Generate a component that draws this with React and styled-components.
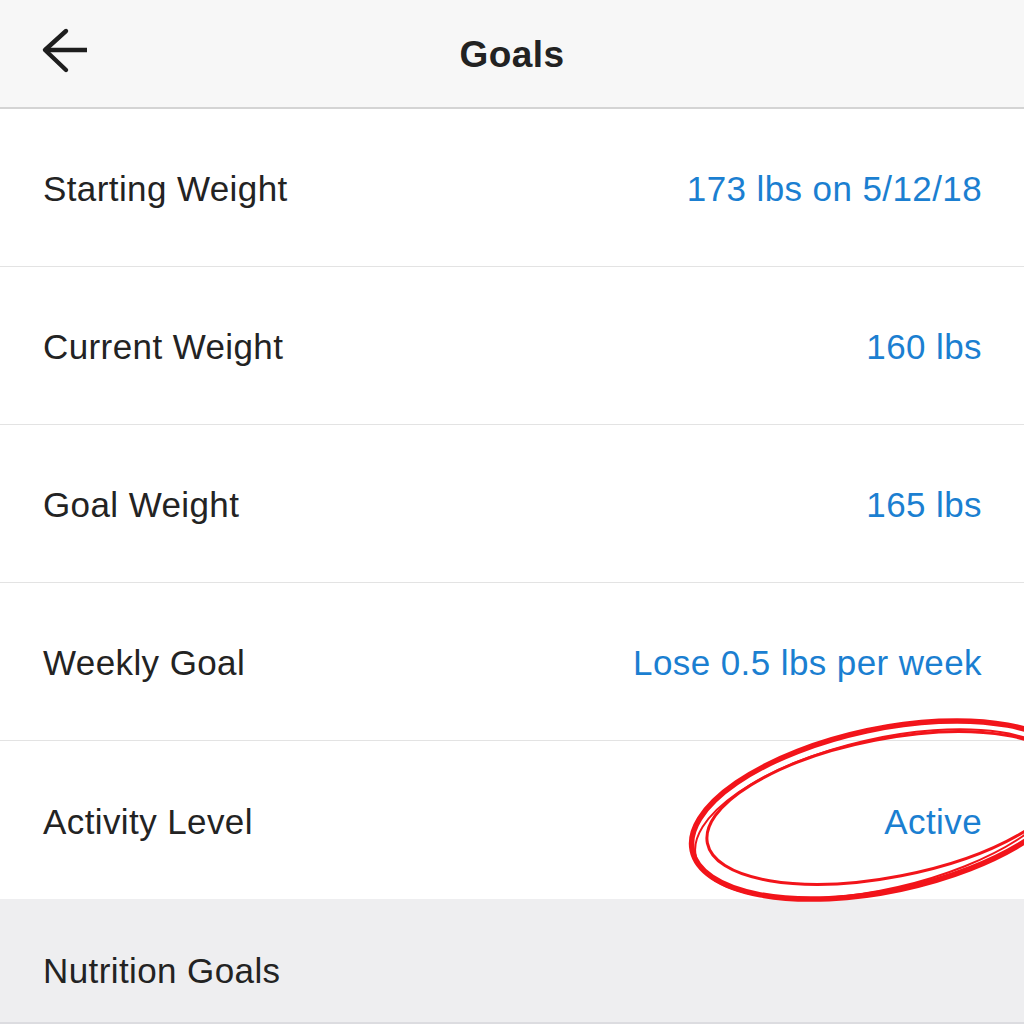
import React from 'react';
import styled, { createGlobalStyle } from 'styled-components';

const font = `"Liberation Sans", Arial, Helvetica, sans-serif`;

const GlobalStyle = createGlobalStyle`
  html, body {
    margin: 0;
    padding: 0;
    background: #ffffff;
  }
  body {
    font-family: ${font};
  }
`;

const Page = styled.div`
  position: relative;
  width: 1024px;
  height: 1024px;
  overflow: hidden;
  background: #ffffff;
  font-family: ${font};
`;

const NavBar = styled.header`
  position: relative;
  display: flex;
  align-items: center;
  justify-content: center;
  height: 109px;
  padding-top: 2px;
  background-color: #f7f7f7;
  border-bottom: 2px solid #d4d4d4;
  box-sizing: border-box;
`;

const BackButton = styled.button`
  position: absolute;
  left: 40px;
  top: 26px;
  width: 50px;
  height: 50px;
  padding: 0;
  border: 0;
  background: none;
  display: flex;
  align-items: center;
  justify-content: center;
`;

const Title = styled.h1`
  margin: 0;
  font-family: ${font};
  font-size: 37px;
  font-weight: 700;
  color: #222222;
  letter-spacing: 0.4px;
`;

const List = styled.div`
  display: flex;
  flex-direction: column;
`;

const Row = styled.div`
  display: flex;
  align-items: center;
  justify-content: space-between;
  height: 158px;
  padding: 3px 42px 0 43px;
  box-sizing: border-box;
  border-bottom: ${(p) => (p.last ? 'none' : '1px solid #e3e3e3')};
`;

const Label = styled.span`
  font-family: ${font};
  font-size: 35px;
  color: #232323;
  letter-spacing: 0.4px;
`;

const Value = styled.span`
  font-family: ${font};
  font-size: 35px;
  color: #1b7fd1;
  letter-spacing: 0.4px;
`;

const SectionHeader = styled.div`
  display: flex;
  align-items: center;
  height: 125px;
  padding: 20px 43px 0;
  box-sizing: border-box;
  background-color: #eeeef0;
  border-bottom: 2px solid #dcdce0;
`;

const SectionTitle = styled.span`
  font-family: ${font};
  font-size: 35px;
  color: #232323;
  letter-spacing: 0.4px;
`;

const Scribble = styled.svg`
  position: absolute;
  left: 660px;
  top: 700px;
  width: 364px;
  height: 210px;
  pointer-events: none;
`;

const rows = [
  { label: 'Starting Weight', value: '173 lbs on 5/12/18' },
  { label: 'Current Weight', value: '160 lbs' },
  { label: 'Goal Weight', value: '165 lbs' },
  { label: 'Weekly Goal', value: 'Lose 0.5 lbs per week' },
  { label: 'Activity Level', value: 'Active' },
];

// back arrow, drawn in page pixels: tip at (43,50), shaft to x=87
const BackArrow = () => (
  <svg width="50" height="50" viewBox="40 26 50 50" fill="none">
    <path d="M46 50 H87" stroke="#1e1e1e" strokeWidth="4.6" />
    <path
      d="M66 31 L45 50 L66 70"
      stroke="#1e1e1e"
      strokeWidth="4.4"
      strokeLinecap="round"
      strokeLinejoin="round"
    />
  </svg>
);

const App = () => (
  <Page>
    <GlobalStyle />
    <NavBar>
      <BackButton aria-label="Back">
        <BackArrow />
      </BackButton>
      <Title>Goals</Title>
    </NavBar>
    <List>
      {rows.map((r, i) => (
        <Row key={r.label} last={i === rows.length - 1}>
          <Label>{r.label}</Label>
          <Value>{r.value}</Value>
        </Row>
      ))}
    </List>
    <SectionHeader>
      <SectionTitle>Nutrition Goals</SectionTitle>
    </SectionHeader>
    <Scribble viewBox="660 700 364 210">
      <g fill="none" stroke="#f2141a" strokeLinecap="round">
        <ellipse cx="884" cy="810" rx="196" ry="81" transform="rotate(-12 884 810)" strokeWidth="5.5" />
        <ellipse cx="888" cy="808" rx="184" ry="69" transform="rotate(-11 888 808)" strokeWidth="3" />
        <ellipse cx="881" cy="814" rx="190" ry="75" transform="rotate(-13 881 814)" strokeWidth="2" />
      </g>
    </Scribble>
  </Page>
);

export default App;
